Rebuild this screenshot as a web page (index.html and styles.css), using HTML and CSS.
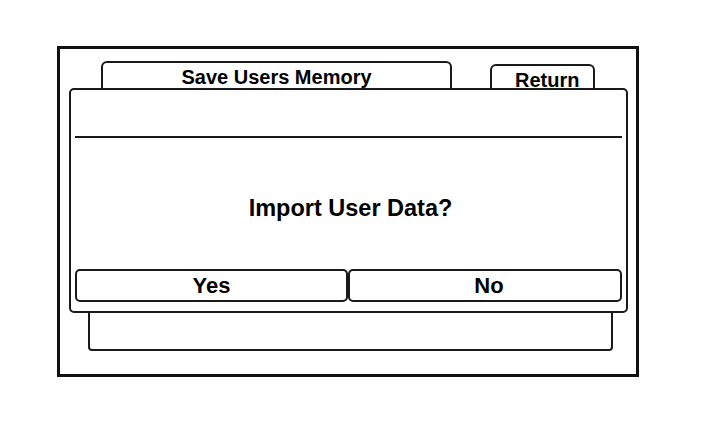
FILE: index.html
```html
<!DOCTYPE html>
<html>
<head>
<meta charset="utf-8">
<link rel="stylesheet" href="styles.css">
</head>
<body>
<div class="frame">
  <div class="screen">
    <div class="tabs">
      <div class="tab tab-title">Save Users Memory</div>
      <div class="tab tab-return">Return</div>
    </div>
    <div class="panel"></div>
  </div>
  <div class="dialog">
    <div class="dialog-head"></div>
    <div class="dialog-msg">Import User Data?</div>
    <div class="dialog-buttons">
      <div class="btn btn-yes">Yes</div>
      <div class="btn btn-no">No</div>
    </div>
  </div>
</div>
</body>
</html>
```

FILE: styles.css
```css
* { box-sizing: border-box; }
html, body { margin: 0; padding: 0; background: #fff; }
body {
  width: 702px;
  height: 430px;
  font-family: "Liberation Sans", Arial, sans-serif;
  font-weight: bold;
  color: #000;
  overflow: hidden;
}
.frame {
  position: relative;
  margin: 46px 0 0 57px;
  width: 582px;
  height: 331px;
  border: 3px solid #111;
}
.screen {
  display: flex;
  flex-direction: column;
  padding-top: 12px;
}
.tabs {
  display: flex;
  align-items: flex-end;
  gap: 38px;
  margin-left: 41px;
}
.tab {
  border: 2px solid #1a1a1a;
  border-bottom: none;
  border-radius: 6px 6px 0 0;
  font-size: 20px;
  line-height: 23px;
  padding-top: 3px;
}
.tab-title {
  width: 351px;
  height: 34px;
  text-align: center;
}
.tab-return {
  width: 105px;
  height: 31px;
  padding-left: 23px;
}
.panel {
  margin-left: 28px;
  width: 525px;
  height: 256px;
  border: 2px solid #1a1a1a;
  border-radius: 0 0 4px 4px;
}
.dialog {
  position: absolute;
  left: 9px;
  top: 39px;
  width: 559px;
  height: 225px;
  background: #fff;
  border: 2px solid #1a1a1a;
  border-radius: 5px;
  display: flex;
  flex-direction: column;
  padding: 0 4px 9px 4px;
}
.dialog-head {
  height: 48px;
  border-bottom: 2px solid #1a1a1a;
}
.dialog-msg {
  flex: 1;
  display: flex;
  align-items: center;
  justify-content: center;
  padding: 10px 0 0 4px;
  font-size: 23.5px;
}
.dialog-buttons {
  display: flex;
  height: 33px;
}
.btn {
  border: 2px solid #1a1a1a;
  border-radius: 5px;
  display: flex;
  align-items: center;
  justify-content: center;
  font-size: 22px;
}
.btn-yes { width: 273px; }
.btn-no { width: 274px; padding-left: 8px; }
```
